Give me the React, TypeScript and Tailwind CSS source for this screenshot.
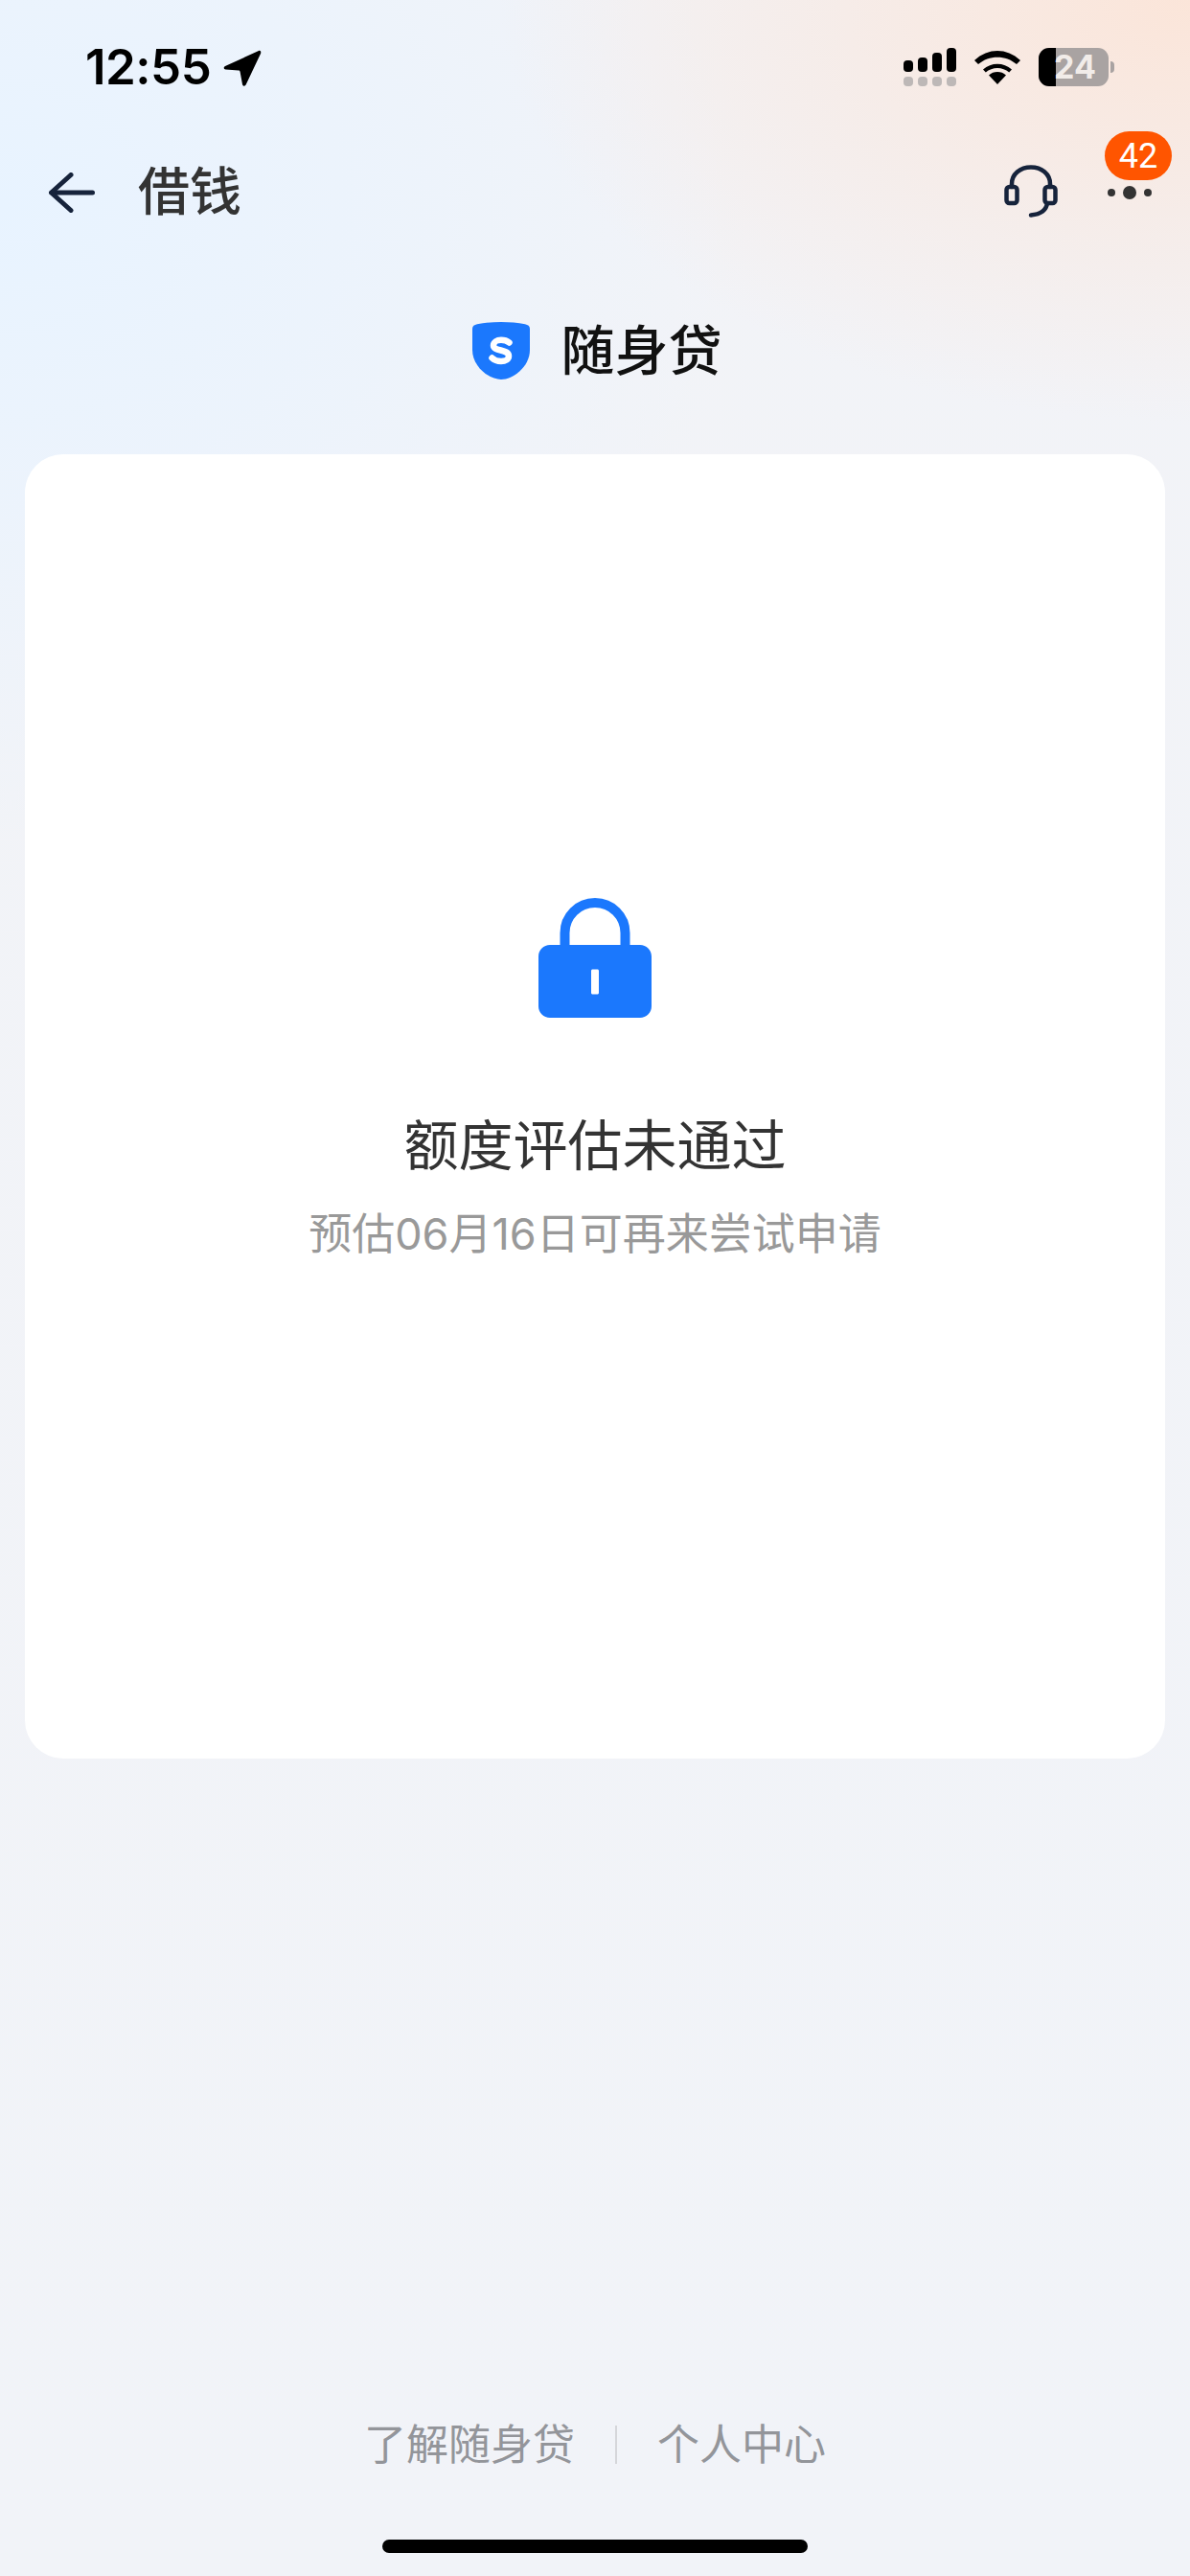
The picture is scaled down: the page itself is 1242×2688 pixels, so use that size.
const cjk = "font-['Inter','Noto_Sans_CJK_SC',sans-serif]";

function StatusBar() {
  return (
    <div className="flex h-[150px] items-start justify-between pl-[89px] pr-[79px] pt-[50px]">
      <div className="flex items-start gap-[13px]">
        <span className="font-['Inter',sans-serif] text-[51px] font-semibold leading-[40px] tracking-[-0.5px] text-black">
          12:55
        </span>
        <svg className="mt-[2px]" width="40" height="38" viewBox="0 0 40 38">
          <path
            d="M37 1 2 17c-2 1-1.500 3.500.5 3.600L16 21.500c1 0 1.500.7 1.600 1.500L20 36c.3 2 2.800 2.400 3.600.6L39 4c.8-2-.2-3.800-2-3Z"
            fill="#000"
          />
        </svg>
      </div>
      <div className="flex items-start">
        <div className="flex flex-col gap-[5px]">
          <div className="flex items-end gap-[5px]">
            <div className="h-[12px] w-[10px] rounded-[4px] bg-black" />
            <div className="h-[15px] w-[10px] rounded-[4px] bg-black" />
            <div className="h-[20px] w-[10px] rounded-[4px] bg-black" />
            <div className="h-[25px] w-[10px] rounded-[4px] bg-black" />
          </div>
          <div className="flex gap-[5px]">
            <div className="h-[10px] w-[10px] rounded-[4px] bg-[#bdb8b7]" />
            <div className="h-[10px] w-[10px] rounded-[4px] bg-[#bdb8b7]" />
            <div className="h-[10px] w-[10px] rounded-[4px] bg-[#bdb8b7]" />
            <div className="h-[10px] w-[10px] rounded-[4px] bg-[#bdb8b7]" />
          </div>
        </div>
        <svg className="ml-[19px] mt-[2px]" width="48" height="36" viewBox="0 0 48 36">
          <path d="M24 36 15 26.500c5-4.600 13-4.600 18 0Z" fill="#000" />
          <path d="M9 20.500 11.800 23.600c6.800-6 17.600-6 24.400 0L39 20.500c-8.500-7.700-21.500-7.700-30 0Z" fill="#000" />
          <path d="M0 11 4 15c11-9.800 29-9.800 40 0l4-4C33.500-2.300 14.500-2.300 0 11Z" fill="#000" />
        </svg>
        <div className="relative ml-[19px] flex h-[40px] w-[73px] overflow-hidden rounded-[11px] bg-[#a9a3a2]">
          <div className="h-full w-[18px] bg-black" />
          <span className="absolute left-[16px] top-0 font-['Inter',sans-serif] text-[34px] font-bold leading-[40px] text-[#f1ece9]">
            24
          </span>
        </div>
        <div className="ml-[2px] mt-[14px] h-[12px] w-[4px] rounded-r-[4px] bg-[#a9a3a2]" />
      </div>
    </div>
  );
}

function NavBar() {
  return (
    <div className="flex h-[102px] items-center justify-between pl-[51px] pr-[40px]">
      <div className="flex items-center">
        <svg width="48" height="42" viewBox="0 0 48 42" fill="none" stroke="#16233b" strokeWidth="5" strokeLinecap="round" strokeLinejoin="round">
          <path d="M45.500 21H3" />
          <path d="M23 2.500 2.500 21 23 39.500" />
        </svg>
        <span className={`${cjk} ml-[45px] text-[54px] font-medium leading-[62px] text-[#333333]`}>借钱</span>
      </div>
      <div className="flex items-center">
        <svg className="mt-[-2px]" width="56" height="56" viewBox="0 0 56 56" fill="none" stroke="#16233b" strokeWidth="4.500" strokeLinecap="round">
          <path d="M8 23v-3C8 9.500 17 2.500 28 2.500S48 9.500 48 20v3" />
          <rect x="2.500" y="23" width="11" height="17" rx="3" />
          <rect x="42.500" y="23" width="11" height="17" rx="3" />
          <path d="M45 40c-1 7.500-7 11.500-17 12.500" />
        </svg>
        <div className="relative ml-[52px] flex h-[24px] w-[46px] items-center justify-between">
          <div className="h-[8px] w-[8px] rounded-full bg-[#333333]" />
          <div className="h-[14px] w-[14px] rounded-full bg-[#333333]" />
          <div className="h-[8px] w-[8px] rounded-full bg-[#333333]" />
          <div className="absolute left-[-3px] top-[-52px] flex h-[51px] w-[70px] items-center justify-center rounded-[26px] bg-[#ff5500] font-['Roboto',sans-serif] text-[36px] leading-none text-white">
            42
          </div>
        </div>
      </div>
    </div>
  );
}

function Brand() {
  return (
    <div className="flex h-[222px] items-center justify-center pl-[4px] pt-[6px]">
      <svg width="60" height="60" viewBox="0 0 60 60">
        <path
          d="M0 7C0 4 2 3 5 2.200 20-.7 40-.7 55 2.200 58 3 60 4 60 7v22C60 47 42 60 30 60 18 60 0 47 0 29Z"
          fill="#1b78fd"
        />
        <path
          d="M38.500 21.500C36 19.500 33 18.800 30 18.800c-4.500 0-8 2.200-8 5.700 0 6.500 16 3.500 16 11 0 3.500-3.500 5.500-8 5.500-4 0-7-1-9.500-3.500"
          fill="none"
          stroke="#fff"
          strokeWidth="6.500"
          strokeLinecap="round"
        />
      </svg>
      <span className={`${cjk} ml-[33px] text-[56px] font-medium leading-[62px] text-[#111111]`}>随身贷</span>
    </div>
  );
}

function LockedCard() {
  return (
    <div className="mx-[26px] flex h-[1361px] flex-col items-center rounded-[40px] bg-white pt-[463px]">
      <svg width="118" height="125" viewBox="0 0 118 125">
        <path d="M27.500 52V36.500C27.500 19 41.500 5 59 5s31.500 14 31.500 31.500V52" fill="none" stroke="#1b78fd" strokeWidth="10" />
        <path
          d="M12 49h94c6.600 0 12 5.400 12 12v52c0 6.600-5.400 12-12 12H12c-6.600 0-12-5.400-12-12V61c0-6.600 5.400-12 12-12Zm43 27v23c0 .8.700 1.500 1.500 1.500h5c.8 0 1.500-.7 1.500-1.500V76c0-.8-.7-1.500-1.500-1.500h-5c-.8 0-1.500.7-1.500 1.500Z"
          fill="#1b78fd"
          fillRule="evenodd"
        />
      </svg>
      <div className={`${cjk} mt-[94px] text-[57px] leading-[80px] text-[#333333]`}>额度评估未通过</div>
      <div className={`${cjk} mt-[22px] text-[45px] leading-[60px] text-[#999999]`}>预估06月16日可再来尝试申请</div>
    </div>
  );
}

function Footer() {
  return (
    <div className="mt-auto flex flex-col items-center">
      <div className={`${cjk} flex items-center text-[44px] leading-[60px] text-[#93959a]`}>
        <span>了解随身贷</span>
        <div className="mx-[42px] h-[40px] w-[2px] bg-[#d5d6da]" />
        <span>个人中心</span>
      </div>
      <div className="mb-[24px] mt-[69px] h-[14px] w-[444px] rounded-full bg-black" />
    </div>
  );
}

export default function App() {
  return (
    <div className="flex h-[2688px] w-[1242px] flex-col overflow-hidden bg-[radial-gradient(720px_440px_at_100%_0%,#fbe5d9_0%,rgba(247,234,228,0.7)_55%,rgba(241,243,247,0)_100%),radial-gradient(780px_660px_at_0%_8%,#e8f3ff_0%,rgba(235,243,253,0.8)_50%,rgba(241,243,247,0)_100%),linear-gradient(180deg,#f2f3f7_0%,#f1f3f8_100%)]">
      <StatusBar />
      <NavBar />
      <Brand />
      <LockedCard />
      <Footer />
    </div>
  );
}
